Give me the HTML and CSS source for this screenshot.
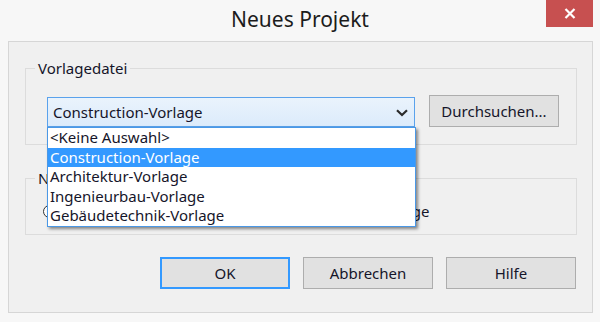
FILE: index.html
```html
<!DOCTYPE html>
<html lang="de">
<head>
<meta charset="utf-8">
<title>Neues Projekt</title>
<link rel="stylesheet" href="styles.css">
</head>
<body>
<div class="window">
  <div class="titlebar">
    <div class="spacer"></div>
    <div class="title">Neues Projekt</div>
    <div class="close">
      <svg width="12" height="11" viewBox="0 0 12 11"><path d="M1.5 1 L10.5 10 M10.5 1 L1.5 10" stroke="#fff" stroke-width="2.2" fill="none"/></svg>
    </div>
  </div>
  <div class="client">
    <fieldset class="group group-tpl">
      <legend>Vorlagedatei</legend>
      <div class="tpl-row">
        <div class="combo-wrap">
          <div class="combo">
            <span class="combo-text">Construction-Vorlage</span>
            <svg class="chev" width="12" height="8" viewBox="0 0 12 8"><path d="M1 1.2 L6 6 L11 1.2" stroke="#2b2b2b" stroke-width="2.2" fill="none"/></svg>
          </div>
          <ul class="list">
            <li>&lt;Keine Auswahl&gt;</li>
            <li class="sel">Construction-Vorlage</li>
            <li>Architektur-Vorlage</li>
            <li>Ingenieurbau-Vorlage</li>
            <li>Gebäudetechnik-Vorlage</li>
          </ul>
        </div>
        <button class="btn browse">Durchsuchen...</button>
      </div>
    </fieldset>
    <fieldset class="group group-new">
      <legend>Neu erstellen</legend>
      <div class="radios">
        <label class="radio"><span class="dot on"></span>Projekt</label>
        <label class="radio"><span class="dot"></span>Projektvorlage</label>
      </div>
    </fieldset>
    <div class="buttons">
      <button class="btn default">OK</button>
      <button class="btn">Abbrechen</button>
      <button class="btn">Hilfe</button>
    </div>
  </div>
</div>
</body>
</html>
```

FILE: styles.css
```css
* { box-sizing: border-box; }
html, body { margin: 0; padding: 0; }
body {
  width: 600px;
  height: 322px;
  overflow: hidden;
  background: #f7f7f7;
  font-family: "Noto Sans", "Open Sans", sans-serif;
  font-size: 15px;
  color: #15152a;
}
.window {
  width: 600px;
  height: 322px;
  background: #f7f7f7;
}
.titlebar {
  height: 41px;
  display: grid;
  grid-template-columns: 1fr auto 1fr;
}
.title {
  font-size: 21px;
  line-height: 38px;
  color: #1c1c1c;
}
.close {
  justify-self: end;
  margin-right: 7px;
  width: 47px;
  height: 27px;
  background: #c75050;
  display: flex;
  align-items: center;
  justify-content: center;
}
.client {
  margin-left: 8px;
  width: 585px;
  height: 272px;
  background: #f0f0f0;
  border: 1px solid #d6d6d6;
  padding: 0 15px 0 16px;
  display: flex;
  flex-direction: column;
}
.group {
  margin: 0;
  padding: 0;
  border: 1px solid #dcdcdc;
  min-width: 0;
}
.group legend {
  margin-left: 9px;
  padding: 0 3px;
  line-height: 16px;
  font-size: 15px;
}
.group-tpl { margin-top: 18px; }
.tpl-row {
  display: flex;
  align-items: flex-end;
  margin: 19px 0 17px 21px;
}
.combo-wrap {
  position: relative;
  width: 368px;
}
.combo {
  height: 30px;
  border: 1px solid #5aa2ec;
  background: linear-gradient(#eaf3fc, #dcebfb);
  display: flex;
  align-items: center;
  padding: 0 5px 0 5px;
}
.combo-text { flex: 1; }
.chev { margin-right: 1px; margin-top: 1px; }
.list {
  position: absolute;
  top: 30px;
  left: 0;
  width: 369px;
  margin: 0;
  padding: 0;
  list-style: none;
  background: #fff;
  border: 1px solid #4a98e6;
  box-shadow: 2px 2px 3px rgba(0,0,0,0.45);
  z-index: 5;
}
.list li {
  height: 19.6px;
  line-height: 19.6px;
  padding-left: 2px;
}
.list li.sel {
  background: #3399ff;
  color: #fff;
}
.btn {
  font-family: inherit;
  font-size: 15px;
  color: #15152a;
  height: 32px;
  width: 130px;
  background: #e1e1e1;
  border: 1px solid #adadad;
  padding: 0;
  margin: 0;
}
.browse { margin-left: 14px; }
.group-new { margin-top: 25px; }
.radios {
  display: flex;
  align-items: center;
  margin: 17px 0 15px 17px;
  height: 16px;
}
.radio {
  display: flex;
  align-items: center;
  gap: 4px;
}
.radio + .radio { margin-left: 200px; }
.dot {
  width: 13px;
  height: 13px;
  border-radius: 50%;
  border: 1px solid #333;
  background: #fff;
  display: inline-block;
  position: relative;
}
.dot.on::after {
  content: "";
  position: absolute;
  left: 3px;
  top: 3px;
  width: 5px;
  height: 5px;
  border-radius: 50%;
  background: #222;
}
.buttons {
  display: flex;
  justify-content: flex-end;
  gap: 13px;
  margin-top: 22px;
  margin-right: 1px;
}
.default {
  border: 1px solid #3399ff;
  box-shadow: inset 0 0 0 1px #3399ff;
}
```
